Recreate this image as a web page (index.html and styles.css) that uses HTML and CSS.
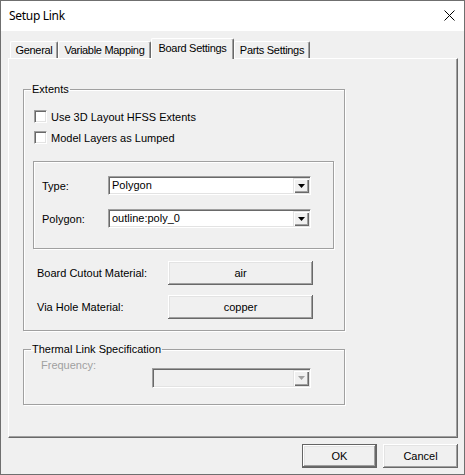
FILE: index.html
```html
<!DOCTYPE html>
<html>
<head>
<meta charset="utf-8">
<link rel="stylesheet" href="styles.css">
</head>
<body>
<div class="window">
  <div class="titlebar">
    <span class="title">Setup Link</span>
    <svg class="close" width="11" height="11" viewBox="0 0 11 11"><path d="M0.5 0.5 L10.5 10.5 M10.5 0.5 L0.5 10.5" stroke="#000" stroke-width="1" fill="none"/></svg>
  </div>
  <div class="client">
    <div class="tabs">
      <div class="tab t-general">General</div>
      <div class="tab t-vm">Variable Mapping</div>
      <div class="tab t-board active">Board Settings</div>
      <div class="tab t-parts">Parts Settings</div>
    </div>
    <div class="panel">
      <fieldset class="group extents">
        <legend>Extents</legend>
        <label class="check first"><span class="box"></span>Use 3D Layout HFSS Extents</label>
        <label class="check second"><span class="box"></span>Model Layers as Lumped</label>
        <div class="subbox">
          <div class="field">
            <span class="lbl">Type:</span>
            <div class="combo"><span class="val">Polygon</span><span class="drop"><svg width="7" height="4" viewBox="0 0 7 4"><polygon points="0,0 7,0 3.5,4" fill="#000"/></svg></span></div>
          </div>
          <div class="field second-field">
            <span class="lbl">Polygon:</span>
            <div class="combo"><span class="val">outline:poly_0</span><span class="drop"><svg width="7" height="4" viewBox="0 0 7 4"><polygon points="0,0 7,0 3.5,4" fill="#000"/></svg></span></div>
          </div>
        </div>
        <div class="matrow first-mat">
          <span class="mlbl">Board Cutout Material:</span>
          <button class="btn mat">air</button>
        </div>
        <div class="matrow second-mat">
          <span class="mlbl">Via Hole Material:</span>
          <button class="btn mat">copper</button>
        </div>
      </fieldset>
      <fieldset class="group thermal">
        <legend>Thermal Link Specification</legend>
        <div class="freqrow">
          <span class="flbl">Frequency:</span>
          <div class="combo disabled"><span class="val"></span><span class="drop"><svg width="7" height="4" viewBox="0 0 7 4"><polygon points="0,0 7,0 3.5,4" fill="#a0a0a0"/></svg></span></div>
        </div>
      </fieldset>
    </div>
    <div class="actions">
      <button class="btn dlg default">OK</button>
      <button class="btn dlg">Cancel</button>
    </div>
  </div>
</div>
</body>
</html>
```

FILE: styles.css
```css
html, body {
  margin: 0;
  padding: 0;
}
body {
  width: 465px;
  height: 475px;
  background: #f0f0f0;
  font-family: "Liberation Sans", Arial, sans-serif;
  font-size: 11px;
  color: #000;
  overflow: hidden;
}
.window {
  box-sizing: border-box;
  width: 465px;
  height: 475px;
  border: 1px solid #6f6f6f;
  background: #f0f0f0;
  display: flex;
  flex-direction: column;
}
.titlebar {
  flex: none;
  box-sizing: border-box;
  height: 30px;
  background: #fff;
  display: flex;
  align-items: center;
  justify-content: space-between;
  padding: 0 9px 2px 8px;
}
.title {
  font-family: "Noto Sans", "Open Sans", sans-serif;
  font-size: 12px;
  letter-spacing: -0.3px;
}
.close {
  display: block;
}
.client {
  flex: 1;
  display: flex;
  flex-direction: column;
}
.tabs {
  display: flex;
  align-items: flex-end;
  height: 20px;
  padding: 7px 0 0 9px;
}
.tab {
  box-sizing: border-box;
  height: 17px;
  border-top: 1px solid #fff;
  border-left: 1px solid #fff;
  border-right: 1px solid #696969;
  box-shadow: inset -1px 0 #a0a0a0;
  border-radius: 2px 2px 0 0;
  padding-top: 2px;
  line-height: 13px;
  text-align: center;
  letter-spacing: -0.3px;
  white-space: nowrap;
  background: #f0f0f0;
}
.tab.active {
  height: 21px;
  margin-bottom: -1px;
  padding-top: 3px;
  position: relative;
  z-index: 1;
}
.t-general { width: 48px; }
.t-vm { width: 93px; }
.t-board { width: 83px; }
.t-parts { width: 76px; }

.panel {
  box-sizing: border-box;
  width: 450px;
  height: 380px;
  margin-left: 7px;
  border: 1px solid;
  border-color: #fff #696969 #696969 #fff;
  box-shadow: inset -1px -1px #a0a0a0;
  padding: 24px 0 0 14px;
}
.group {
  box-sizing: border-box;
  width: 322px;
  margin: 0;
  padding: 0;
  min-inline-size: 0;
  border: 1px solid #a0a0a0;
  box-shadow: 1px 1px 0 #fff, inset 1px 1px 0 #fff;
}
.group legend {
  margin-left: 7px;
  padding: 0 1px;
  line-height: 13px;
}
.extents {
  padding-bottom: 11px;
}
.check {
  display: flex;
  align-items: center;
  height: 17px;
  margin-left: 10px;
}
.check.first { margin-top: 12px; }
.check.second { margin-top: 4px; }
.box {
  box-sizing: border-box;
  width: 13px;
  height: 13px;
  background: #fff;
  border: 1px solid;
  border-color: #a0a0a0 #fff #fff #a0a0a0;
  box-shadow: inset 1px 1px #696969, inset -1px -1px #e3e3e3;
  margin-right: 4px;
}
.subbox {
  box-sizing: border-box;
  width: 301px;
  height: 88px;
  margin: 15px 0 0 9px;
  padding-top: 14px;
  border: 1px solid #a0a0a0;
  box-shadow: 1px 1px 0 #fff, inset 1px 1px 0 #fff;
}
.field {
  display: flex;
  align-items: center;
  height: 19px;
}
.field.second-field { margin-top: 14px; }
.lbl {
  box-sizing: border-box;
  width: 74px;
  padding-left: 8px;
}
.combo {
  box-sizing: border-box;
  width: 203px;
  height: 19px;
  display: flex;
  background: #fff;
  border: 1px solid;
  border-color: #a0a0a0 #fff #fff #a0a0a0;
  box-shadow: inset 1px 1px #696969, inset -1px -1px #e3e3e3;
}
.val {
  flex: 1;
  padding-left: 3px;
  line-height: 17px;
  white-space: nowrap;
}
.drop {
  box-sizing: border-box;
  width: 16px;
  height: 15px;
  margin: 1px 1px 1px 0;
  background: #f0f0f0;
  display: flex;
  align-items: center;
  justify-content: center;
  box-shadow: inset 1px 1px #e3e3e3, inset 2px 2px #fff, inset -1px -1px #696969, inset -2px -2px #a0a0a0;
}
.drop svg {
  display: block;
}
.matrow {
  display: flex;
  align-items: center;
  height: 24px;
  margin-left: 13px;
}
.matrow.first-mat { margin-top: 12px; }
.matrow.second-mat { margin-top: 10px; }
.mlbl {
  width: 131px;
  white-space: nowrap;
}
.btn {
  box-sizing: border-box;
  font-family: inherit;
  font-size: 11px;
  color: #000;
  background: #f0f0f0;
  border: none;
  padding: 0;
  margin: 0;
  text-align: center;
  box-shadow: inset -1px -1px #696969, inset 1px 1px #fff, inset -2px -2px #a0a0a0, inset 2px 2px #e3e3e3;
}
.btn.mat {
  width: 145px;
  height: 24px;
}
.thermal {
  margin-top: 12px;
  padding-bottom: 16px;
}
.freqrow {
  display: flex;
  align-items: flex-start;
}
.flbl {
  box-sizing: border-box;
  width: 128px;
  padding-left: 17px;
  margin-top: 3px;
  line-height: 13px;
  color: #a0a0a0;
}
.combo.disabled {
  width: 159px;
  height: 20px;
  margin-top: 12px;
  background: #f0f0f0;
}
.combo.disabled .drop {
  height: 16px;
}
.actions {
  display: flex;
  justify-content: flex-end;
  gap: 6px;
  padding: 6px 6px 0 0;
}
.btn.dlg {
  width: 75px;
  height: 24px;
}
.btn.default {
  border: 1px solid #646464;
}
```
